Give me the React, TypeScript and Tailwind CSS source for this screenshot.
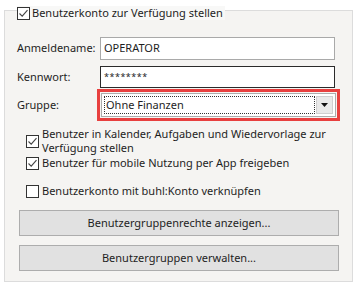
import React from "react";

const CheckBox = ({ checked }: { checked?: boolean }) => (
  <span className="flex h-[13px] w-[13px] shrink-0 items-center justify-center border border-[#333] bg-white">
    {checked && (
      <svg width="11" height="11" viewBox="0 0 11 11">
        <path d="M1.5 5.5 L4.2 8.2 L9.5 2.2" fill="none" stroke="#444" strokeWidth="1.1" />
      </svg>
    )}
  </span>
);

const options = [
  { text: "Benutzer in Kalender, Aufgaben und Wiedervorlage zur Verfügung stellen", checked: true },
  { text: "Benutzer für mobile Nutzung per App freigeben", checked: true },
];

const App = () => {
  return (
    <div
      className="h-[287px] w-[358px] overflow-hidden bg-white pt-[10px] pl-[4px] text-[11px] text-[#1e1e1e]"
      style={{ fontFamily: '"Noto Sans", "Liberation Sans", sans-serif' }}
    >
      <div className="relative h-[272px] w-[349px] border border-[#dcdcdc] bg-[#f5f4f2] px-[12px] pt-[26px]">
        {/* legend on the frame */}
        <label className="absolute left-[12px] top-[-5px] flex items-center gap-[2px] bg-[#f8f8f7] pr-[2px] leading-[14px]">
          <CheckBox checked />
          <span>Benutzerkonto zur Verfügung stellen</span>
        </label>

        <div className="flex items-center">
          <span className="w-[83px]">Anmeldename:</span>
          <div className="flex h-[23px] w-[235px] items-center border border-[#a9a9a9] bg-white px-[3px]">OPERATOR</div>
        </div>

        <div className="mt-[6px] flex items-center">
          <span className="w-[83px]">Kennwort:</span>
          <div className="flex h-[22px] w-[235px] items-center border border-[#2b2b2b] bg-white px-[3px] text-[9px] tracking-[0.5px]">
            ********
          </div>
        </div>

        <div className="mt-[1px] flex items-center">
          <span className="w-[80px]">Gruppe:</span>
          <div className="w-[243px] border-[3px] border-[#e8403f] p-[1px]">
            <div className="flex h-[24px] items-center border border-[#acacac] bg-white p-[2px]">
              <div className="flex h-full flex-1 items-center border border-dotted border-[#333] pl-[1px]">Ohne Finanzen</div>
              <div className="ml-[1px] flex h-full w-[17px] items-center justify-center border border-[#d0d0d0] bg-[#e9e9e9]">
                <svg width="7" height="4" viewBox="0 0 7 4">
                  <path d="M0 0 H7 L3.5 4 Z" fill="#111" />
                </svg>
              </div>
            </div>
          </div>
        </div>

        <div className="mt-[6px] flex flex-col pl-[9px] leading-[14px]">
          {options.map((o, i) => (
            <label key={i} className={`flex items-center gap-[3px] ${i > 0 ? "mt-[1px]" : ""}`}>
              <CheckBox checked={o.checked} />
              <span className="w-[295px]">{o.text}</span>
            </label>
          ))}
          <label className="mt-[14px] flex items-center gap-[3px]">
            <CheckBox />
            <span>Benutzerkonto mit buhl:Konto verknüpfen</span>
          </label>
        </div>

        <div className="mt-[12px] flex flex-col gap-[9px] pl-[2px]">
          <button className="h-[26px] w-[320px] border border-[#adadad] bg-[#e1e1e1]">Benutzergruppenrechte anzeigen...</button>
          <button className="h-[26px] w-[320px] border border-[#adadad] bg-[#e1e1e1]">Benutzergruppen verwalten...</button>
        </div>
      </div>
    </div>
  );
};

export default App;
